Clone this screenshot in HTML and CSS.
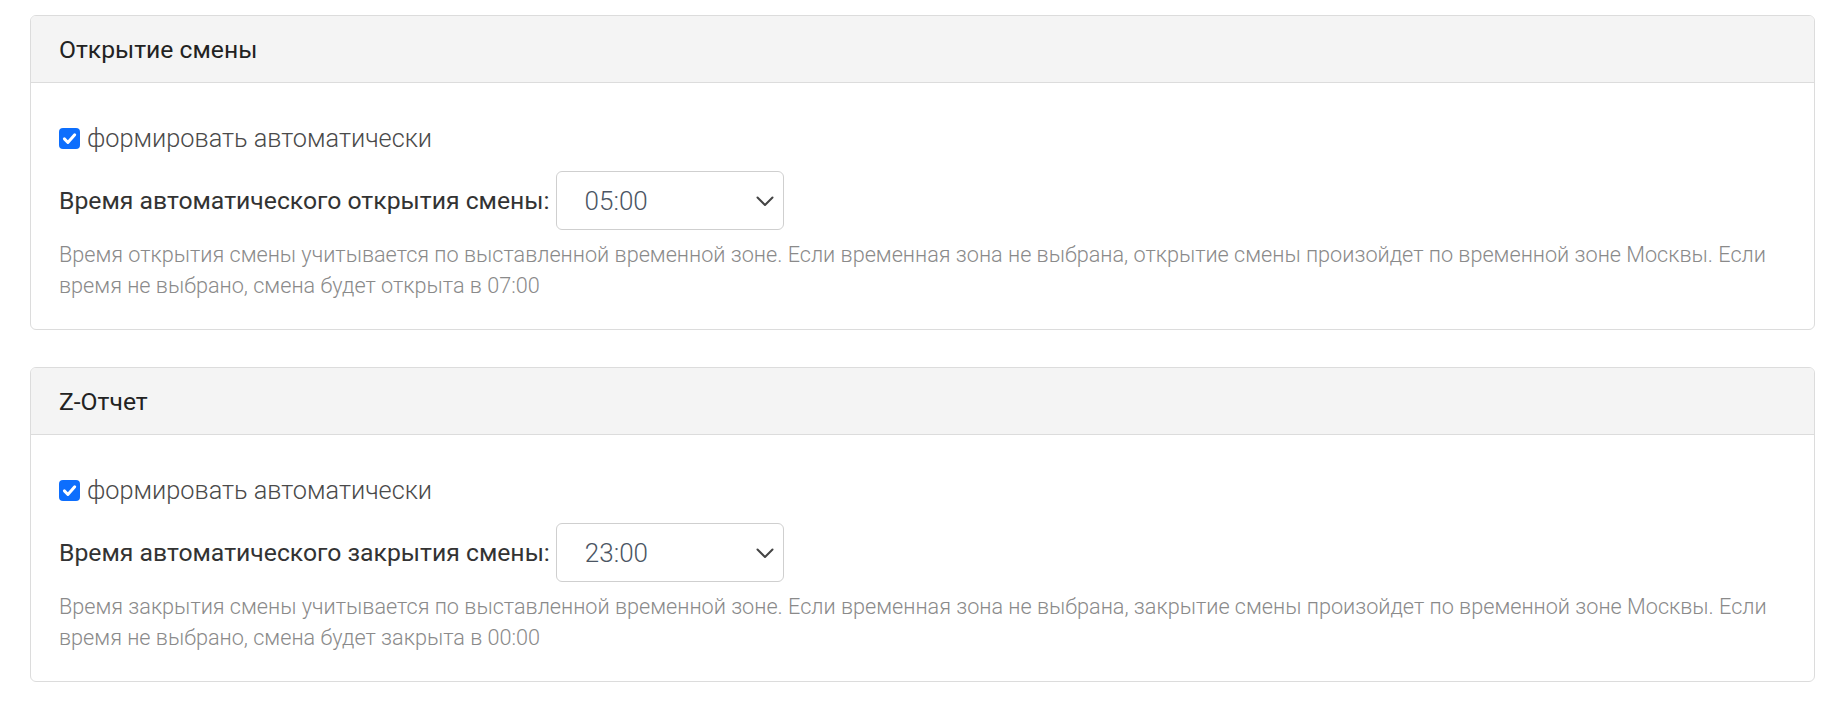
FILE: index.html
```html
<!DOCTYPE html>
<html lang="ru">
<head>
<meta charset="utf-8">
<title>Смена</title>
<link rel="stylesheet" href="styles.css">
</head>
<body>
<div class="page">
  <section class="card">
    <div class="card-header">Открытие смены</div>
    <div class="card-body">
      <label class="check-row">
        <span class="check-box"><svg width="17" height="17" viewBox="0 0 16 16"><path d="M3.2 8.4 L6.5 11.7 L12.9 4.5" fill="none" stroke="#fff" stroke-width="2.8" stroke-linecap="round" stroke-linejoin="round"/></svg></span>
        <span class="check-text">формировать автоматически</span>
      </label>
      <div class="field-row">
        <span class="field-label">Время автоматического открытия смены:</span>
        <div class="select-wrap">
          <span class="select-value">05:00</span>
          <svg class="chevron" width="18" height="11" viewBox="0 0 18 11"><path d="M1.5 1.5 L9 9 L16.5 1.5" fill="none" stroke="#444" stroke-width="2" stroke-linecap="round" stroke-linejoin="round"/></svg>
        </div>
      </div>
      <p class="help">Время открытия смены учитывается по выставленной временной зоне. Если временная зона не выбрана, открытие смены произойдет по временной зоне Москвы. Если время не выбрано, смена будет открыта в 07:00</p>
    </div>
  </section>
  <section class="card">
    <div class="card-header">Z-Отчет</div>
    <div class="card-body">
      <label class="check-row">
        <span class="check-box"><svg width="17" height="17" viewBox="0 0 16 16"><path d="M3.2 8.4 L6.5 11.7 L12.9 4.5" fill="none" stroke="#fff" stroke-width="2.8" stroke-linecap="round" stroke-linejoin="round"/></svg></span>
        <span class="check-text">формировать автоматически</span>
      </label>
      <div class="field-row">
        <span class="field-label">Время автоматического закрытия смены:</span>
        <div class="select-wrap">
          <span class="select-value">23:00</span>
          <svg class="chevron" width="18" height="11" viewBox="0 0 18 11"><path d="M1.5 1.5 L9 9 L16.5 1.5" fill="none" stroke="#444" stroke-width="2" stroke-linecap="round" stroke-linejoin="round"/></svg>
        </div>
      </div>
      <p class="help">Время закрытия смены учитывается по выставленной временной зоне. Если временная зона не выбрана, закрытие смены произойдет по временной зоне Москвы. Если время не выбрано, смена будет закрыта в 00:00</p>
    </div>
  </section>
</div>
</body>
</html>
```

FILE: styles.css
```css
* { box-sizing: border-box; }
html, body { margin: 0; padding: 0; background: #fff; }
body {
  font-family: Roboto, "Noto Sans", "Liberation Sans", sans-serif;
  color: #212529;
}
.page {
  padding: 15px 23px 0 30px;
  display: flex;
  flex-direction: column;
  gap: 37px;
}
.card {
  border: 1px solid #dcdcdc;
  border-radius: 6px;
  overflow: hidden;
  height: 315px;
}
.card-header {
  background: #f4f4f4;
  border-bottom: 1px solid #dcdcdc;
  padding: 14px 28px 13px;
  font-size: 24.7px;
  line-height: 39px;
  font-weight: 400;
  color: #222;
}
.card-body {
  padding: 37px 28px 0;
}
.check-row {
  display: flex;
  align-items: center;
  height: 36px;
  gap: 7px;
}
.check-box {
  width: 21px;
  height: 21px;
  border-radius: 4px;
  background: #0d6efd;
  display: flex;
  align-items: center;
  justify-content: center;
  flex: none;
}
.check-text {
  font-size: 25.3px;
  font-weight: 300;
  color: #4a4a4a;
}
.field-row {
  margin-top: 15px;
  display: flex;
  align-items: center;
  gap: 6px;
}
.field-label {
  font-size: 24.75px;
  font-weight: 400;
  color: #333;
}
.select-wrap {
  position: relative;
  width: 228px;
  height: 59px;
  border: 1px solid #cfcfcf;
  border-radius: 6px;
  display: flex;
  align-items: center;
  padding-left: 28px;
}
.select-value {
  font-size: 26px;
  font-weight: 300;
  color: #4b5563;
}
.chevron {
  position: absolute;
  right: 9px;
  top: 24px;
}
.help {
  margin: 10px 0 0;
  font-size: 21.65px;
  line-height: 30.6px;
  font-weight: 300;
  color: #8a8a8a;
}
```
